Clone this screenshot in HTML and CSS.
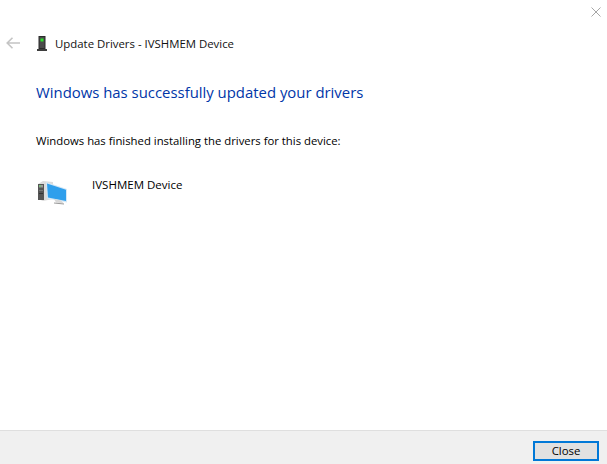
FILE: index.html
```html
<!DOCTYPE html>
<html lang="en">
<head>
<meta charset="utf-8">
<title>Update Drivers - IVSHMEM Device</title>
<link rel="stylesheet" href="styles.css">
</head>
<body>
<div class="window">
  <div class="titlebar">
    <svg class="close-icon" width="10" height="10" viewBox="0 0 10 10"><path d="M.5.5l9 9M9.5.5l-9 9" stroke="#a6a6a6" stroke-width="1" fill="none"/></svg>
  </div>
  <div class="nav">
    <svg class="back-icon" width="14" height="12" viewBox="0 0 14 12"><path d="M6.500.7L1.200 6l5.300 5.300M1.200 6H14" stroke="#c4c4c4" stroke-width="1.600" fill="none"/></svg>
    <svg class="device-icon" width="10" height="15" viewBox="0 0 10 15"><rect x="1.500" y="0" width="7" height="13" fill="#2b2b2b"/><rect x="2.500" y="1" width="5" height="11" fill="#4a4a4a"/><rect x="3.500" y="2.500" width="3" height="3" fill="#2fe02f"/><rect x="0" y="13" width="10" height="2" fill="#3d3d3d"/></svg>
    <span class="nav-title">Update Drivers - IVSHMEM Device</span>
  </div>
  <main class="content">
    <h1 class="heading">Windows has successfully updated your drivers</h1>
    <p class="message">Windows has finished installing the drivers for this device:</p>
    <div class="device">
      <svg class="pc-icon" width="32" height="26" viewBox="0 0 32 26">
        <path d="M2 3l5-3 10 1v17l-10 2-5-2z" fill="#dcdcdc"/>
        <rect x="2" y="3" width="6" height="16" fill="#555"/>
        <rect x="3" y="4" width="4" height="2.500" fill="#9a9a9a"/>
        <rect x="3" y="4.500" width="2" height="1" fill="#5fd35f"/>
        <rect x="3" y="9" width="4" height="1" fill="#777"/>
        <rect x="3" y="12" width="4" height="1" fill="#333"/>
        <path d="M10 1l21 7v13.500l-20-4z" fill="#d5e8f6"/>
        <path d="M11 2.500l19 6.300v11.200l-18-3.500z" fill="#2f9fec"/>
        <path d="M18 18l7 1.500 3 3-8-1z" fill="#d8d8d8"/>
        <path d="M18 21.500l10 1v1l-10-1z" fill="#9a9a9a"/>
      </svg>
      <span class="device-name">IVSHMEM Device</span>
    </div>
  </main>
  <footer class="footer">
    <button class="close-btn" type="button">Close</button>
  </footer>
</div>
</body>
</html>
```
FILE: styles.css
```css
* { box-sizing: border-box; }
html, body { margin: 0; height: 100%; }
body {
  background: #fff;
  font-family: "Open Sans", "Noto Sans", "Liberation Sans", sans-serif;
  color: #000;
  font-size: 11.400px;
  overflow: hidden;
}
.window {
  display: flex;
  flex-direction: column;
  height: 464px;
  width: 607px;
}
.titlebar {
  display: flex;
  justify-content: flex-end;
  height: 30px;
  padding: 7px 6px 0 0;
}
.close-icon { display: block; }
.nav {
  display: flex;
  align-items: center;
  height: 26px;
  padding-left: 6px;
}
.back-icon { margin-right: 17px; }
.device-icon { margin-right: 8px; }
.nav-title { color: #111; }
.content {
  flex: 1;
  padding: 0 0 0 36px;
}
.heading {
  margin: 26px 0 0;
  font-size: 14.900px;
  line-height: 21px;
  font-weight: 400;
  color: #0036a8;
}
.message {
  margin: 30px 0 0;
  font-size: 11.330px;
  line-height: 16px;
}
.device {
  display: flex;
  align-items: flex-start;
  margin-top: 28px;
}
.pc-icon { margin-top: 4px; }
.device-name { margin-left: 24px; font-size: 11.520px; line-height: 16px; }
.footer {
  display: flex;
  justify-content: flex-end;
  align-items: flex-start;
  height: 34px;
  padding: 10px 8px 0 0;
  background: #f0f0f0;
  border-top: 1px solid #dfdfdf;
}
.close-btn {
  width: 66px;
  height: 20px;
  padding: 0;
  background: #e1e1e1;
  border: 2px solid #0078d7;
  font: inherit;
  line-height: 14px;
  color: #000;
}
```
